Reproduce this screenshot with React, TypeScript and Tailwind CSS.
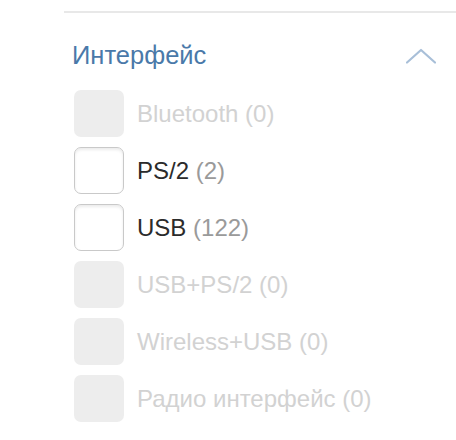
const items = [
  { label: "Bluetooth", count: 0, enabled: false },
  { label: "PS/2", count: 2, enabled: true },
  { label: "USB", count: 122, enabled: true },
  { label: "USB+PS/2", count: 0, enabled: false },
  { label: "Wireless+USB", count: 0, enabled: false },
  { label: "Радио интерфейс", count: 0, enabled: false },
];

export default function App() {
  return (
    <div
      className="w-[456px] h-[440px] overflow-hidden bg-white pl-[64px] pt-[11px]"
      style={{ fontFamily: '"Liberation Sans", Arial, sans-serif' }}
    >
      <div className="border-t-2 border-[#e8e8e8]">
        {/* Заголовок фильтра */}
        <div className="mt-[8px] h-[69px] flex items-center justify-between pl-[8px] pr-[20px]">
          <span className="text-[25.5px] text-[#4a79a9] leading-none">Интерфейс</span>
          <svg width="30" height="16" viewBox="0 0 30 16" fill="none">
            <polyline points="1,14.5 15,2 29,14.5" stroke="#a8bfd8" strokeWidth="2.2" strokeLinecap="round" strokeLinejoin="round" />
          </svg>
        </div>

        {/* Варианты */}
        <div className="pl-[10px] flex flex-col gap-[10px]">
          {items.map((it) => (
            <label key={it.label} className="flex items-center gap-[13px] h-[47px]">
              <span
                className={
                  it.enabled
                    ? "w-[50px] h-[47px] rounded-[7px] border border-[#c9c9c9] bg-white shadow-[inset_0_2px_3px_rgba(0,0,0,0.08)]"
                    : "w-[50px] h-[47px] rounded-[7px] bg-[#ededed]"
                }
              />
              <span className="text-[24px] leading-none">
                <span className={it.enabled ? "text-[#2b2b2b]" : "text-[#d2d2d2]"}>{it.label}</span>{" "}
                <span className={it.enabled ? "text-[#9a9a9a]" : "text-[#d2d2d2]"}>({it.count})</span>
              </span>
            </label>
          ))}
        </div>
      </div>
    </div>
  );
}
